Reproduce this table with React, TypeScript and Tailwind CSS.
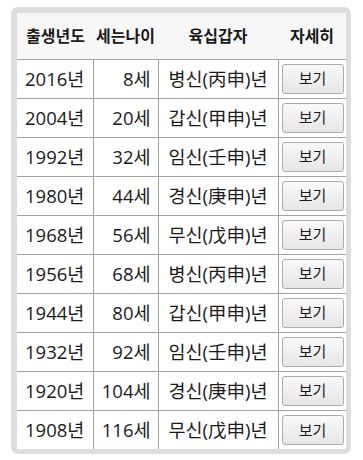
import React from 'react';

type Row = { year: number; age: number; name: string };

const rows: Row[] = [
  { year: 2016, age: 8, name: '병신(丙申)년' },
  { year: 2004, age: 20, name: '갑신(甲申)년' },
  { year: 1992, age: 32, name: '임신(壬申)년' },
  { year: 1980, age: 44, name: '경신(庚申)년' },
  { year: 1968, age: 56, name: '무신(戊申)년' },
  { year: 1956, age: 68, name: '병신(丙申)년' },
  { year: 1944, age: 80, name: '갑신(甲申)년' },
  { year: 1932, age: 92, name: '임신(壬申)년' },
  { year: 1920, age: 104, name: '경신(庚申)년' },
  { year: 1908, age: 116, name: '무신(戊申)년' },
];

export default function App() {
  return (
    <div className="w-[363px] h-[460px] bg-white pt-[7px] pl-[11px] font-['Open_Sans','Noto_Sans_CJK_KR',sans-serif] text-[#1a1a1a]">
      <div className="w-[340px] rounded-[7px] bg-[#dddddd] p-[6px] pr-[5px] pb-[5px]">
        <table className="w-[329px] border-collapse bg-white table-fixed">
          <colgroup>
            <col className="w-[76px]" />
            <col className="w-[65px]" />
            <col className="w-[120px]" />
            <col className="w-[68px]" />
          </colgroup>
          <thead>
            <tr className="h-[46px] bg-[#f7f7f7] text-[16px] font-bold">
              <th className="border-b border-[#a3a3a3] pl-[9px] text-left whitespace-nowrap">출생년도</th>
              <th className="border-b border-[#a3a3a3] pl-[3px] text-left whitespace-nowrap">세는나이</th>
              <th className="border-b border-[#a3a3a3] text-center whitespace-nowrap">육십갑자</th>
              <th className="border-b border-[#a3a3a3] text-center whitespace-nowrap">자세히</th>
            </tr>
          </thead>
          <tbody className="text-[18.5px]">
            {rows.map((r, i) => (
              <tr key={r.year} className="h-[39px]">
                <td className={`pl-[8px] whitespace-nowrap ${i > 0 ? 'border-t border-[#a3a3a3]' : ''}`}>{r.year}년</td>
                <td className={`border-l border-[#a3a3a3] pr-[7px] text-right whitespace-nowrap ${i > 0 ? 'border-t' : ''}`}>{r.age}세</td>
                <td className={`border-l border-[#a3a3a3] text-center whitespace-nowrap ${i > 0 ? 'border-t' : ''}`}>{r.name}</td>
                <td className={`border-l border-[#a3a3a3] pl-[3px] ${i > 0 ? 'border-t' : ''}`}>
                  <button className="w-[62px] h-[30px] rounded-[3px] border border-[#acacac] bg-gradient-to-b from-[#f9f9f9] to-[#e6e6e6] text-[15px] text-[#1a1a1a] leading-none">
                    보기
                  </button>
                </td>
              </tr>
            ))}
          </tbody>
        </table>
      </div>
    </div>
  );
}
